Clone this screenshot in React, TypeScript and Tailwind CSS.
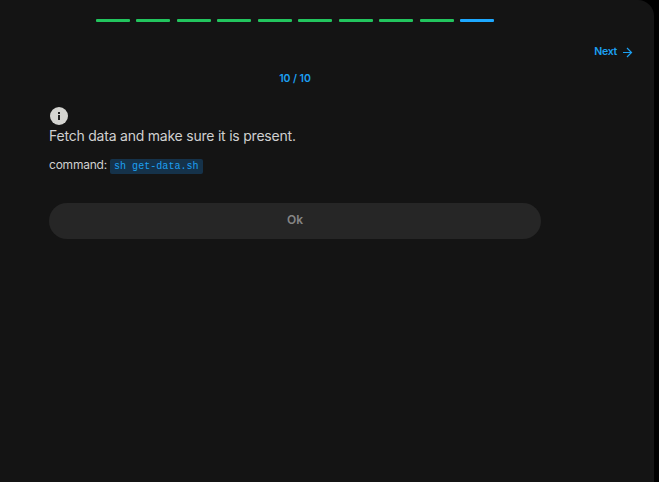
const steps = Array.from({ length: 10 }, (_, i) => i < 9);

export default function App() {
  return (
    <div className="h-[482px] w-[659px] overflow-hidden bg-black font-['Inter',sans-serif]">
      <main className="h-full w-[654px] rounded-tr-2xl bg-[#141414] pt-[19px]">
        <div className="ml-24 flex w-[398px] justify-between">
          {steps.map((done, i) => (
            <div key={i} className={`h-[3px] w-[34px] rounded-[1px] ${done ? "bg-[#22c55e]" : "bg-[#1da8ff]"}`} />
          ))}
        </div>
        <div className="mt-[22px] flex h-4 items-center justify-end gap-[5px] pr-[21px] text-[10.5px] font-semibold leading-4 text-[#1ca0f2]">
          <button className="h-4 tracking-[-0.25px]">Next</button>
          <svg className="mt-px" width="11" height="11" viewBox="0 0 11 11" fill="none" stroke="currentColor" strokeWidth="1.2">
            <path d="M1 5.5H9.3M5 1L9.5 5.5L5 10" />
          </svg>
        </div>
        <div className="mt-[11px] w-[590px] text-center text-[10.5px] font-semibold leading-4 tracking-[-0.05px] text-[#1ca0f2]">10 / 10</div>
        <section className="ml-[49px] mt-[19px] w-[492px] text-[#d0d0d0]">
          <svg className="block" width="20" height="20" viewBox="0 0 20 20">
            <circle cx="10" cy="10" r="9" fill="#d4d4d0" />
            <path d="M9 6H11V8H9ZM9 9H11V14H9Z" fill="#202020" />
          </svg>
          <p className="text-[14px] leading-5 tracking-[-0.22px]">Fetch data and make sure it is present.</p>
          <p className="mt-[9px] flex h-5 items-center gap-[3px] text-[12px] leading-5 tracking-[-0.22px]">
            <span>command:</span>
            <code className="mt-[3px] h-[15px] rounded-[2px] bg-[#15324a] px-1 font-['Liberation_Mono',monospace] text-[10px] leading-4 tracking-[0.05px] text-[#1da0f2]">sh get-data.sh</code>
          </p>
          <button className="mt-7 block h-9 w-full rounded-full bg-[#262626] pb-[3px] text-[12px] font-semibold text-[#858585]">Ok</button>
        </section>
      </main>
    </div>
  );
}
